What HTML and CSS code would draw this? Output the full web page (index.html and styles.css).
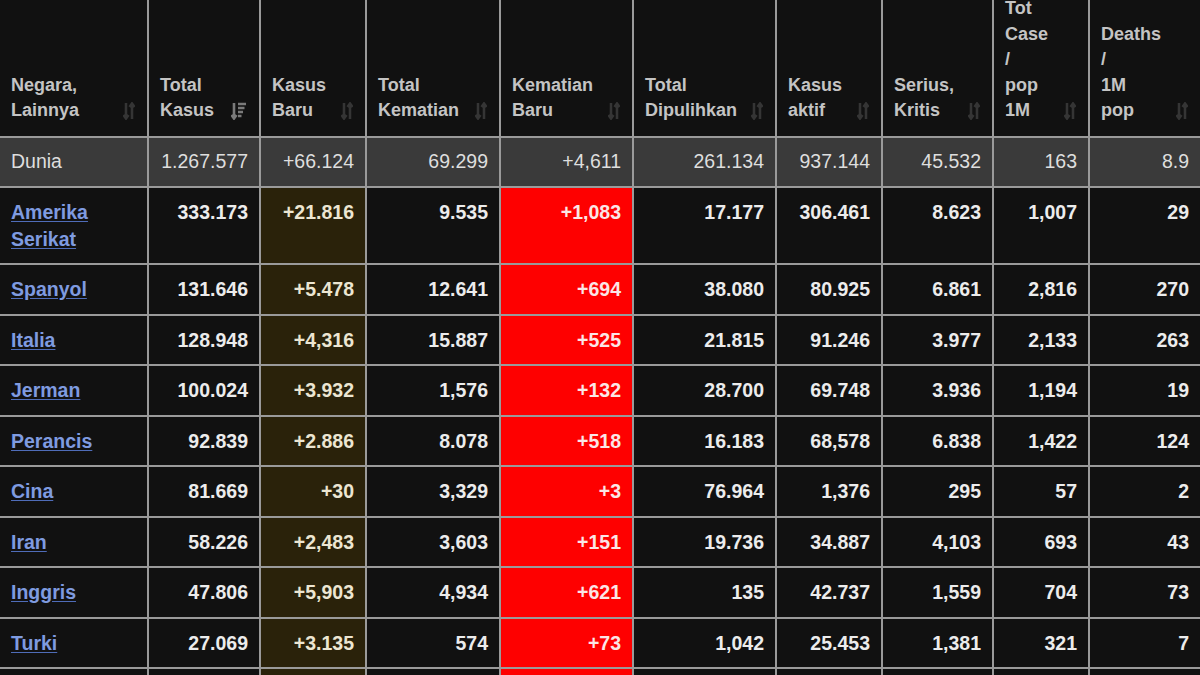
FILE: index.html
```html
<!DOCTYPE html>
<html lang="id">
<head>
<meta charset="utf-8">
<title>Kasus Corona</title>
<link rel="stylesheet" href="styles.css">
</head>
<body>
<table class="stats">
  <colgroup>
    <col class="c1"><col class="c2"><col class="c3"><col class="c4"><col class="c5">
    <col class="c6"><col class="c7"><col class="c8"><col class="c9"><col class="c10">
  </colgroup>
  <thead>
    <tr>
      <th><div class="hd"><span>Negara,<br>Lainnya</span><svg class="sort" viewBox="0 0 12 18"><path d="M3 1v15M0.5 13l2.5 3.5 2.5-3.5M9 17V2M6.5 5L9 1.5 11.5 5"/></svg></div></th>
      <th><div class="hd"><span>Total<br>Kasus</span><svg class="sort on" viewBox="0 0 16 18"><path d="M3 1v15M0.5 13l2.5 3.5 2.5-3.5"/><path d="M7 2h8M7 6h6.5M7 10h5M7 14h3.5" /></svg></div></th>
      <th><div class="hd"><span>Kasus<br>Baru</span><svg class="sort" viewBox="0 0 12 18"><path d="M3 1v15M0.5 13l2.5 3.5 2.5-3.5M9 17V2M6.5 5L9 1.5 11.5 5"/></svg></div></th>
      <th><div class="hd"><span>Total<br>Kematian</span><svg class="sort" viewBox="0 0 12 18"><path d="M3 1v15M0.5 13l2.5 3.5 2.5-3.5M9 17V2M6.5 5L9 1.5 11.5 5"/></svg></div></th>
      <th><div class="hd"><span>Kematian<br>Baru</span><svg class="sort" viewBox="0 0 12 18"><path d="M3 1v15M0.5 13l2.5 3.5 2.5-3.5M9 17V2M6.5 5L9 1.5 11.5 5"/></svg></div></th>
      <th><div class="hd"><span>Total<br>Dipulihkan</span><svg class="sort" viewBox="0 0 12 18"><path d="M3 1v15M0.5 13l2.5 3.5 2.5-3.5M9 17V2M6.5 5L9 1.5 11.5 5"/></svg></div></th>
      <th><div class="hd"><span>Kasus<br>aktif</span><svg class="sort" viewBox="0 0 12 18"><path d="M3 1v15M0.5 13l2.5 3.5 2.5-3.5M9 17V2M6.5 5L9 1.5 11.5 5"/></svg></div></th>
      <th><div class="hd"><span>Serius,<br>Kritis</span><svg class="sort" viewBox="0 0 12 18"><path d="M3 1v15M0.5 13l2.5 3.5 2.5-3.5M9 17V2M6.5 5L9 1.5 11.5 5"/></svg></div></th>
      <th><div class="hd"><span>Tot<br>Case<br>/<br>pop<br>1M</span><svg class="sort" viewBox="0 0 12 18"><path d="M3 1v15M0.5 13l2.5 3.5 2.5-3.5M9 17V2M6.5 5L9 1.5 11.5 5"/></svg></div></th>
      <th><div class="hd"><span>Deaths<br>/<br>1M<br>pop</span><svg class="sort" viewBox="0 0 12 18"><path d="M3 1v15M0.5 13l2.5 3.5 2.5-3.5M9 17V2M6.5 5L9 1.5 11.5 5"/></svg></div></th>
    </tr>
  </thead>
  <tbody>
    <tr class="world">
      <td class="name">Dunia</td><td>1.267.577</td><td>+66.124</td><td>69.299</td><td>+4,611</td><td>261.134</td><td>937.144</td><td>45.532</td><td>163</td><td>8.9</td>
    </tr>
    <tr>
      <td class="name"><a href="#">Amerika Serikat</a></td><td>333.173</td><td class="new">+21.816</td><td>9.535</td><td class="dead">+1,083</td><td>17.177</td><td>306.461</td><td>8.623</td><td>1,007</td><td>29</td>
    </tr>
    <tr>
      <td class="name"><a href="#">Spanyol</a></td><td>131.646</td><td class="new">+5.478</td><td>12.641</td><td class="dead">+694</td><td>38.080</td><td>80.925</td><td>6.861</td><td>2,816</td><td>270</td>
    </tr>
    <tr>
      <td class="name"><a href="#">Italia</a></td><td>128.948</td><td class="new">+4,316</td><td>15.887</td><td class="dead">+525</td><td>21.815</td><td>91.246</td><td>3.977</td><td>2,133</td><td>263</td>
    </tr>
    <tr>
      <td class="name"><a href="#">Jerman</a></td><td>100.024</td><td class="new">+3.932</td><td>1,576</td><td class="dead">+132</td><td>28.700</td><td>69.748</td><td>3.936</td><td>1,194</td><td>19</td>
    </tr>
    <tr>
      <td class="name"><a href="#">Perancis</a></td><td>92.839</td><td class="new">+2.886</td><td>8.078</td><td class="dead">+518</td><td>16.183</td><td>68,578</td><td>6.838</td><td>1,422</td><td>124</td>
    </tr>
    <tr>
      <td class="name"><a href="#">Cina</a></td><td>81.669</td><td class="new">+30</td><td>3,329</td><td class="dead">+3</td><td>76.964</td><td>1,376</td><td>295</td><td>57</td><td>2</td>
    </tr>
    <tr>
      <td class="name"><a href="#">Iran</a></td><td>58.226</td><td class="new">+2,483</td><td>3,603</td><td class="dead">+151</td><td>19.736</td><td>34.887</td><td>4,103</td><td>693</td><td>43</td>
    </tr>
    <tr>
      <td class="name"><a href="#">Inggris</a></td><td>47.806</td><td class="new">+5,903</td><td>4,934</td><td class="dead">+621</td><td>135</td><td>42.737</td><td>1,559</td><td>704</td><td>73</td>
    </tr>
    <tr>
      <td class="name"><a href="#">Turki</a></td><td>27.069</td><td class="new">+3.135</td><td>574</td><td class="dead">+73</td><td>1,042</td><td>25.453</td><td>1,381</td><td>321</td><td>7</td>
    </tr>
    <tr class="tail">
      <td class="name"></td><td></td><td class="new"></td><td></td><td class="dead"></td><td></td><td></td><td></td><td></td><td></td>
    </tr>
  </tbody>
</table>
</body>
</html>
```
FILE: styles.css
```css
html, body {
  margin: 0;
  padding: 0;
  background: #111111;
  overflow: hidden;
}

.stats {
  table-layout: fixed;
  width: 1204px;
  margin: -18px 0 0 -2px;
  border-collapse: separate;
  border-spacing: 2px;
  background: #9a9a9a;
  font-family: "Liberation Sans", Arial, sans-serif;
}

.c1 { width: 147px; }
.c2 { width: 110px; }
.c3 { width: 104px; }
.c4 { width: 132px; }
.c5 { width: 131px; }
.c6 { width: 141px; }
.c7 { width: 104px; }
.c8 { width: 109px; }
.c9 { width: 94px; }
.c10 { width: 110px; }

.stats th {
  background: #111111;
  color: #c4c4c4;
  font-size: 18px;
  font-weight: bold;
  line-height: 25.5px;
  text-align: left;
  vertical-align: bottom;
  padding: 12px 12px 12px 11px;
}

.hd {
  display: flex;
  align-items: flex-end;
  justify-content: space-between;
}

.sort {
  width: 12px;
  height: 18px;
  margin-bottom: 4px;
  flex: none;
  fill: none;
  stroke: #353535;
  stroke-width: 2.6;
}

.sort.on {
  width: 16px;
  stroke: #7a7a7a;
}

.stats td {
  background: #111111;
  color: #ececec;
  font-size: 19.5px;
  font-weight: bold;
  line-height: 27px;
  text-align: right;
  vertical-align: top;
  padding: 11px 11px 10.5px;
}

.stats tr.tail td {
  height: 27px;
}

.stats td.name {
  text-align: left;
}

.stats a {
  color: #7f9be0;
  text-decoration: underline;
  text-decoration-color: #4f6cb8;
  text-underline-offset: 2px;
}

.stats td.new {
  background: #2a220a;
  color: #ece6d2;
}

.stats td.dead {
  background: #fe0000;
  color: #fbe6e6;
}

.stats tr.world td {
  background: #3a3a3a;
  color: #dedede;
  font-weight: normal;
  padding: 10px 11px 11px;
}
```
